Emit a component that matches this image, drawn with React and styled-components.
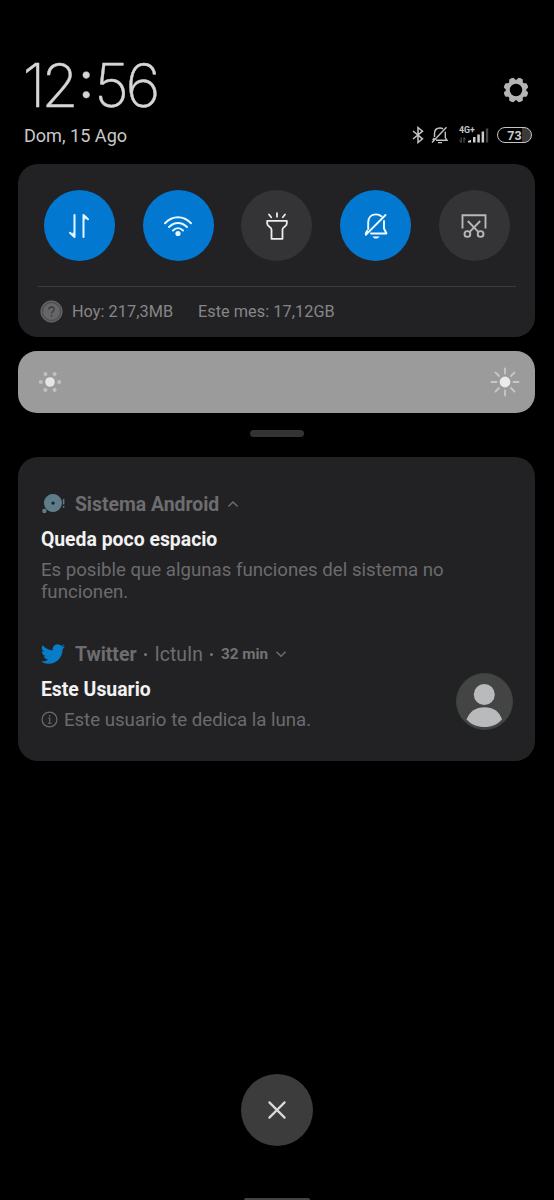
import React from "react";
import styled, { createGlobalStyle } from "styled-components";

const GlobalStyle = createGlobalStyle`
  * {
    box-sizing: border-box;
  }

  body {
    margin: 0;
    background: #000000;
    font-family: Roboto, "Liberation Sans", sans-serif;
  }

  svg {
    display: block;
    flex-shrink: 0;
  }
`;

const Screen = styled.div`
  display: flex;
  flex-direction: column;
  width: 554px;
  height: 1200px;
  padding: 55px 18.6px 0 18.4px;
  overflow: hidden;
  background: #000000;
`;

const Header = styled.header`
  display: flex;
  flex-shrink: 0;
  justify-content: space-between;
  height: 109.4px;
  padding: 0 3.4px 0 5.5px;
`;

const HeaderLeft = styled.div`
  display: flex;
  flex-direction: column;
`;

const Clock = styled.div`
  display: flex;
  height: 68px;
  margin-left: -1.5px;
  font-family: Inter, Roboto, sans-serif;
  font-size: 60px;
  font-weight: 200;
  line-height: 61px;
  letter-spacing: -3.6px;
  color: #d6d6d6;
  white-space: nowrap;
  -webkit-text-stroke: 0.4px #d6d6d6;
`;

const Colon = styled.span`
  margin: -5px 4.5px 0 4px;
  font-size: 50px;
  font-weight: 400;
`;

const DateText = styled.div`
  font-size: 18.1px;
  line-height: 26px;
  color: #c8c8c8;
  white-space: nowrap;
`;

const HeaderRight = styled.div`
  display: flex;
  flex-direction: column;
  align-items: flex-end;
  padding-top: 22px;
`;

const GearIcon = styled.svg`
  margin: 0 3px 19px 0;
`;

const StatusRow = styled.div`
  display: flex;
  align-items: center;
  height: 26px;
`;

const MutedBell = styled.svg`
  margin-left: 7px;
`;

const Network = styled.div`
  width: 30px;
  height: 18px;
  margin: 0 8px 0 10px;
`;

const NetworkLabel = styled.div`
  font-size: 8.8px;
  font-weight: 700;
  line-height: 8px;
  color: #c4c4c4;
`;

const Signal = styled.svg`
  margin-top: -7px;
`;

const Battery = styled.div`
  display: flex;
  align-items: center;
  justify-content: center;
  width: 35px;
  height: 16px;
  border: 1.8px solid #c4c4c4;
  border-radius: 8px;
  background: linear-gradient(90deg, #000000 72%, #3a3a3a 72%);
  font-size: 12.5px;
  font-weight: 700;
  line-height: 13px;
  color: #cccccc;
`;

const Panel = styled.section`
  flex-shrink: 0;
  height: 172.4px;
  padding: 26px 19.5px 0;
  border-radius: 20px;
  background: #222224;
`;

const Toggles = styled.div`
  display: flex;
  justify-content: space-between;
  padding: 0 6.2px 0 6px;
`;

const Toggle = styled.button`
  display: flex;
  align-items: center;
  justify-content: center;
  width: 71px;
  height: 71px;
  padding: 0;
  border: 0;
  border-radius: 50%;
  background: ${(props) => (props.$on ? "#0278d1" : "#343436")};
  color: ${(props) => props.$color || "#e6f6ff"};
`;

const Divider = styled.div`
  height: 1px;
  margin-top: 24.6px;
  background: #3b3b3d;
`;

const Usage = styled.div`
  display: flex;
  align-items: center;
  height: 50px;
  padding-left: 2px;
  font-size: 16.3px;
  letter-spacing: 0.05px;
  color: #868688;
  white-space: nowrap;
`;

const UsageToday = styled.span`
  width: 126px;
  margin-left: 9px;
`;

const Brightness = styled.div`
  display: flex;
  flex-shrink: 0;
  align-items: center;
  justify-content: space-between;
  height: 61.6px;
  margin-top: 14.4px;
  padding: 0 15.4px 0 19.4px;
  border-radius: 19px;
  background: #9b9b9b;
`;

const Handle = styled.div`
  flex-shrink: 0;
  align-self: center;
  width: 54px;
  height: 7px;
  margin-top: 17.2px;
  border-radius: 3.5px;
  background: #333335;
`;

const Notifications = styled.section`
  flex-shrink: 0;
  height: 304px;
  margin-top: 20px;
  padding: 34px 22px 0 22.5px;
  border-radius: 20px;
  background: #222224;
`;

const Notification = styled.article`
  height: 150px;
`;

const AppRow = styled.div`
  display: flex;
  align-items: center;
  height: 27px;
  font-size: 19.4px;
  color: #6d6d6f;
  white-space: nowrap;
`;

const AppName = styled.span`
  margin-left: 10px;
  font-weight: 700;
`;

const Dot = styled.span`
  width: 3px;
  height: 3px;
  margin: 0 7.5px;
  border-radius: 50%;
  background: #77777a;
`;

const Age = styled.span`
  margin-right: 7px;
  font-size: 15.3px;
  font-weight: 700;
  color: #737375;
`;

const Chevron = styled.svg`
  margin-left: ${(props) => props.$gap || 0}px;
`;

const Title = styled.div`
  margin-top: 9px;
  font-size: 19.4px;
  font-weight: 700;
  line-height: 26px;
  color: #f2f2f2;
  white-space: nowrap;
`;

const Message = styled.div`
  display: flex;
  align-items: center;
  gap: 6px;
  margin-top: 6px;
  font-size: 18.65px;
  line-height: 22px;
  color: #6b6b6d;
`;

const Body = styled.div`
  display: flex;
  justify-content: space-between;
`;

const Avatar = styled.svg`
  margin-top: 5px;
`;

const CloseButton = styled.button`
  display: flex;
  flex-shrink: 0;
  align-items: center;
  justify-content: center;
  align-self: center;
  width: 72px;
  height: 72px;
  margin-top: 313px;
  padding: 0;
  border: 0;
  border-radius: 50%;
  background: #3c3c3c;
`;

const HomeBar = styled.div`
  flex-shrink: 0;
  align-self: center;
  width: 66px;
  height: 4px;
  margin-top: 52px;
  border-radius: 2px 2px 0 0;
  background: #454545;
`;

const Gear = () => {
  const teeth = [0, 45, 90, 135, 180, 225, 270, 315];
  return (
    <GearIcon width="26" height="26" viewBox="-13 -13 26 26">
      <circle r="8.2" fill="none" stroke="#b4b4b4" strokeWidth="4" />
      {teeth.map((angle) => (
        <path
          key={angle}
          d="M-3.6-9L-2.3-12.2Q0-12.9 2.3-12.2L3.6-9Z"
          transform={`rotate(${angle + 22.5})`}
          fill="#b4b4b4"
        />
      ))}
    </GearIcon>
  );
};

const DimSun = () => (
  <svg width="24" height="24" viewBox="-12 -12 24 24">
    <circle r="4.8" fill="#e6e6e6" />
    {[0, 60, 120, 180, 240, 300].map((angle) => (
      <circle key={angle} cx="9.2" r="2" fill="#c0c0c0" transform={`rotate(${angle})`} />
    ))}
  </svg>
);

const BrightSun = () => (
  <svg width="30" height="30" viewBox="-15 -15 30 30">
    <circle r="5.4" fill="#ebebeb" />
    {[0, 45, 90, 135, 180, 225, 270, 315].map((angle) => (
      <path
        key={angle}
        d="M8.5 0H13.5"
        stroke="#c8c8c8"
        strokeWidth="1.8"
        strokeLinecap="round"
        transform={`rotate(${angle})`}
      />
    ))}
  </svg>
);

const App = () => {
  return (
    <Screen>
      <GlobalStyle />
      <Header>
        <HeaderLeft>
          <Clock>
            12<Colon>:</Colon>56
          </Clock>
          <DateText>Dom, 15 Ago</DateText>
        </HeaderLeft>
        <HeaderRight>
          <Gear />
          <StatusRow>
            <svg width="12" height="18" viewBox="0 0 12 18" fill="none" stroke="#c4c4c4" strokeWidth="1.5">
              <path d="M1 5L10.5 12.8L6 16.5V1.5L10.5 5.2L1 13" />
            </svg>
            <MutedBell width="18" height="18" viewBox="0 0 18 18" fill="none" stroke="#c4c4c4" strokeWidth="1.4">
              <path d="M3.5 11V7.5C3.5 4 5.8 2 9 2C10.2 2 11.2 2.3 12 2.9M14.3 5.8V11.5L16 14.2H5M1.7 14.2L3.2 11.8M7 16.6H11M1 16.5L15.5 1.2" />
            </MutedBell>
            <Network>
              <NetworkLabel>4G+</NetworkLabel>
              <Signal width="30" height="17" viewBox="0 0 30 17">
                <path d="M2.2 10.5V15.5L.5 13.5M5 15.8V10.5L6.6 12.5" fill="none" stroke="#5a5a5a" />
                <path d="M9 15.5V14L12 12.8V15.5ZM14 15.5V10H16.5V15.5ZM18.3 15.5V7.5H20.8V15.5ZM22.6 15.5V4.5H25.1V15.5Z" fill="#cccccc" />
                <path d="M26.9 15.5V1.5H29.2V15.5Z" fill="#484848" />
              </Signal>
            </Network>
            <Battery>73</Battery>
          </StatusRow>
        </HeaderRight>
      </Header>

      <Panel>
        <Toggles>
          <Toggle $on aria-label="Datos">
            <svg width="24" height="26" viewBox="0 0 24 26" fill="none" stroke="currentColor" strokeWidth="2" strokeLinecap="round" strokeLinejoin="round">
              <path d="M7.5 2V24L3 19.8M16.5 24V2L21 6.2" />
              <path d="M7.5 20V24L4.5 20.8ZM16.5 6V2L19.5 5.2Z" fill="currentColor" strokeWidth="0.6" />
            </svg>
          </Toggle>
          <Toggle $on aria-label="Wi-Fi">
            <svg width="30" height="24" viewBox="0 0 30 24" fill="none" stroke="currentColor" strokeWidth="2" strokeLinecap="round">
              <path d="M2 9.3C9.5 1.2 20.5 1.2 28 9.3M6 13C11.3 7.5 18.7 7.5 24 13M10 16.5C13 13.5 17 13.5 20 16.5" />
              <circle cx="15" cy="19.5" r="2.6" fill="currentColor" stroke="none" />
            </svg>
          </Toggle>
          <Toggle $color="#ececec" aria-label="Linterna">
            <svg width="24" height="28" viewBox="0 0 24 28" fill="none" stroke="currentColor" strokeWidth="1.8" strokeLinecap="round" strokeLinejoin="round">
              <path d="M2.2 8.8H21.8V11.8C21.8 14.5 17.5 15 17.5 17.5V26.8H6.5V17.5C6.5 15 2.2 14.5 2.2 11.8ZM12 1.2V4.7M4 2.5L6.2 5.2M20 2.5L17.8 5.2" />
            </svg>
          </Toggle>
          <Toggle $on $color="#f3fbff" aria-label="Silencio">
            <svg width="24" height="28" viewBox="0 0 24 28" fill="none" stroke="currentColor" strokeWidth="1.9" strokeLinecap="round" strokeLinejoin="round">
              <path d="M4.2 17V10.5C4.2 5.5 7.2 2.4 12 2.4C14.2 2.4 16 3 17.3 4.2M20 9V16.5L22.5 21.5H7M1.7 21.5L3.2 18.8M1.8 22.8L21.5 3" />
              <path d="M8.5 24.5H15.5C14.7 26 13.5 26.5 12 26.5C10.5 26.5 9.3 26 8.5 24.5Z" fill="currentColor" stroke="none" />
            </svg>
          </Toggle>
          <Toggle $color="#b7b7b8" aria-label="Captura">
            <svg width="26" height="26" viewBox="0 0 26 26" fill="none" stroke="currentColor" strokeWidth="1.9">
              <path d="M1.5 15.5V2.3H24.5V15.5M6.8 8L17.3 18.8M19.2 8L8.7 18.8" />
              <circle cx="6.4" cy="21" r="2.9" />
              <circle cx="19.6" cy="21" r="2.9" />
            </svg>
          </Toggle>
        </Toggles>
        <Divider />
        <Usage>
          <svg width="23" height="23" viewBox="0 0 23 23">
            <circle cx="11.5" cy="11.5" r="10.7" fill="#5b5b5d" stroke="#6d6d6f" strokeWidth="0.8" />
            <circle cx="11.5" cy="11.5" r="8.9" fill="#666668" stroke="#464648" strokeWidth="0.8" />
            <path d="M8.9 9.4C8.9 6.2 14.2 6.2 14.2 9.3C14.2 11.3 11.6 11.4 11.6 13.4M11.6 15V16.4" fill="none" stroke="#39393b" strokeWidth="1.3" />
          </svg>
          <UsageToday>Hoy: 217,3MB</UsageToday>
          <span>Este mes: 17,12GB</span>
        </Usage>
      </Panel>

      <Brightness>
        <DimSun />
        <BrightSun />
      </Brightness>
      <Handle />

      <Notifications>
        <Notification>
          <AppRow>
            <svg width="24" height="22" viewBox="0 0 24 22">
              <path d="M12 1A9 9 0 1 1 11.9 1ZM12 8.5A1.6 1.6 0 1 0 12.1 8.5Z" fill="#5f7d89" fillRule="evenodd" />
              <circle cx="3.4" cy="18" r="2.2" fill="#5f7d89" />
              <path d="M22.6 6V11.5M22.6 13V14.8" stroke="#5f7d89" strokeWidth="1.5" />
            </svg>
            <AppName>Sistema Android</AppName>
            <Chevron $gap={7.5} width="12" height="12" viewBox="0 0 12 12" fill="none" stroke="#6d6d6f" strokeWidth="1.5">
              <path d="M1.4 8.5L6 4L10.6 8.5" />
            </Chevron>
          </AppRow>
          <Title>Queda poco espacio</Title>
          <Message>Es posible que algunas funciones del sistema no funcionen.</Message>
        </Notification>

        <Notification>
          <AppRow>
            <svg width="24" height="22" viewBox="0 2 24 20">
              <path
                fill="#087dc7"
                d="M23.95 4.57a10 10 0 0 1-2.82.77 4.96 4.96 0 0 0 2.16-2.72c-.95.55-2 .95-3.13 1.18a4.92 4.92 0 0 0-8.38 4.48C7.69 8.1 4.07 6.13 1.64 3.16a4.92 4.92 0 0 0 1.52 6.57 4.9 4.9 0 0 1-2.23-.61v.06a4.92 4.92 0 0 0 3.95 4.83 5 5 0 0 1-2.21.08 4.94 4.94 0 0 0 4.6 3.42A9.87 9.87 0 0 1 0 19.54a13.99 13.99 0 0 0 7.55 2.21c9.05 0 14-7.5 14-13.98 0-.21 0-.42-.02-.63a9.94 9.94 0 0 0 2.42-2.57z"
              />
            </svg>
            <AppName>Twitter</AppName>
            <Dot />
            <span>IctuIn</span>
            <Dot />
            <Age>32 min</Age>
            <Chevron width="12" height="12" viewBox="0 0 12 12" fill="none" stroke="#6d6d6f" strokeWidth="1.5">
              <path d="M1.4 3.8L6 8.3L10.6 3.8" />
            </Chevron>
          </AppRow>
          <Body>
            <div>
              <Title>Este Usuario</Title>
              <Message>
                <svg width="17" height="17" viewBox="0 0 17 17" fill="none" stroke="#6b6b6d">
                  <circle cx="8.5" cy="8.5" r="7.4" strokeWidth="1.2" />
                  <path d="M7.2 7H8.7V12.3M7 12.3H10.4M8.6 4V5.4" strokeWidth="1.1" />
                </svg>
                Este usuario te dedica la luna.
              </Message>
            </div>
            <Avatar width="57" height="57" viewBox="0 0 57 57">
              <circle cx="28.5" cy="28.5" r="28" fill="#444445" stroke="#35483a" />
              <circle cx="28.3" cy="21.5" r="10.5" fill="#b9babb" />
              <path d="M10.5 46.5C13.5 38.5 20 34.3 28.5 34.3S43.5 38.5 46 46.5C41 51.8 35.5 54 28.5 54S15.5 51.8 10.5 46.5Z" fill="#b9babb" />
            </Avatar>
          </Body>
        </Notification>
      </Notifications>

      <CloseButton aria-label="Cerrar">
        <svg width="20" height="20" viewBox="0 0 20 20" stroke="#dadada" strokeWidth="2.2" strokeLinecap="round">
          <path d="M2.4 2.4L17.6 17.6M17.6 2.4L2.4 17.6" />
        </svg>
      </CloseButton>
      <HomeBar />
    </Screen>
  );
};

export default App;
